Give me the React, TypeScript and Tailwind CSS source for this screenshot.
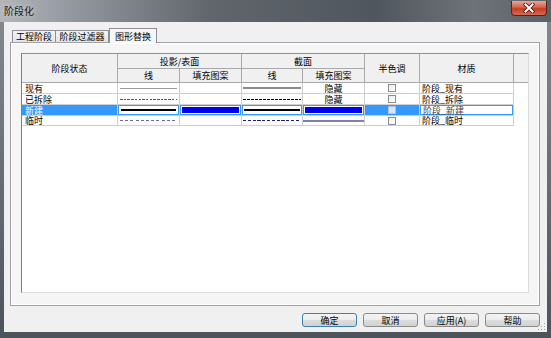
import React from "react";

type Stroke = { color: string; width?: number; dash?: string } | null;

type Row = {
  name: string;
  projLine: Stroke;
  cutLine: Stroke;
  cutFill: "hidden" | "line" | null;
  material: string;
  selected?: boolean;
};

const rows: Row[] = [
  {
    name: "现有",
    projLine: { color: "#9a9a9a" },
    cutLine: { color: "#8a8a8a", width: 2 },
    cutFill: "hidden",
    material: "阶段_现有",
  },
  {
    name: "已拆除",
    projLine: { color: "#555555", dash: "2.5 1.2" },
    cutLine: { color: "#000000", dash: "3 1" },
    cutFill: "hidden",
    material: "阶段_拆除",
  },
  {
    name: "新建",
    projLine: { color: "#000000", width: 2 },
    cutLine: { color: "#000000", width: 2 },
    cutFill: null,
    material: "阶段_新建",
    selected: true,
  },
  {
    name: "临时",
    projLine: { color: "#6a6aa6", dash: "3 2.2" },
    cutLine: { color: "#1e1e80", dash: "3.2 1.6" },
    cutFill: "line",
    material: "阶段_临时",
  },
];

function LineSample({ stroke }: { stroke: Stroke }) {
  if (!stroke) return null;
  const w = stroke.width ?? 1;
  return (
    <svg className="block w-full h-[3px]" preserveAspectRatio="none">
      <line
        x1="0"
        y1={w === 2 ? 1 : 1.5}
        x2="100%"
        y2={w === 2 ? 1 : 1.5}
        stroke={stroke.color}
        strokeWidth={w}
        strokeDasharray={stroke.dash}
        shapeRendering="crispEdges"
      />
    </svg>
  );
}

function CheckBox({ disabled }: { disabled?: boolean }) {
  return (
    <div
      className={
        disabled
          ? "w-[8px] h-[8px] border border-[#a9c3df] bg-[#d6e6f6]"
          : "w-[8px] h-[8px] border border-[#8e8f8f] bg-gradient-to-br from-[#ececec] to-white"
      }
    />
  );
}

const cell = "h-full whitespace-nowrap border-r border-b border-[#cfcfcf] flex items-center";

function DataRow({ row, last }: { row: Row; last: boolean }) {
  const sel = row.selected;
  const h = last ? "h-[10px]" : "h-[11px]";
  return (
    <div className={`flex ${h}`}>
      <div className={`${cell} w-[96px] pl-[3px] ${sel ? "bg-[#3399ff] text-white" : ""}`}>{row.name}</div>

      {/* 投影/表面 线 */}
      <div className={`${cell} w-[62px] ${sel ? "bg-[#3399ff] p-px" : "px-[2px]"}`}>
        {sel ? (
          <div className="w-full h-full bg-white flex items-center px-[2px]">
            <LineSample stroke={row.projLine} />
          </div>
        ) : (
          <LineSample stroke={row.projLine} />
        )}
      </div>

      {/* 投影/表面 填充图案 */}
      <div className={`${cell} w-[62px] ${sel ? "bg-[#3399ff] p-px" : ""}`}>
        {sel && (
          <div className="w-full h-full bg-white p-px">
            <div className="w-full h-full bg-[#0000f0]" />
          </div>
        )}
      </div>

      {/* 截面 线 */}
      <div className={`${cell} w-[61px] ${sel ? "bg-[#3399ff] p-px" : "px-[1px]"}`}>
        {sel ? (
          <div className="w-full h-full bg-white flex items-center px-[1px]">
            <LineSample stroke={row.cutLine} />
          </div>
        ) : (
          <LineSample stroke={row.cutLine} />
        )}
      </div>

      {/* 截面 填充图案 */}
      <div className={`${cell} w-[62px] justify-center ${sel ? "bg-[#3399ff] p-px" : ""}`}>
        {sel && (
          <div className="w-full h-full bg-white p-px">
            <div className="w-full h-full bg-[#0000f0]" />
          </div>
        )}
        {row.cutFill === "hidden" && <span>隐藏</span>}
        {row.cutFill === "line" && <div className="w-full h-[2px] bg-[#8080b0]" />}
      </div>

      {/* 半色调 */}
      <div className={`${cell} w-[55px] justify-center ${sel ? "bg-[#3399ff]" : ""}`}>
        <CheckBox disabled={sel} />
      </div>

      {/* 材质 */}
      <div className={`${cell} w-[94px] ${sel ? "bg-[#3399ff] p-px" : "pl-[2px]"}`}>
        {sel ? (
          <div className="w-full h-full bg-white flex items-center pl-[2px] text-[#444]">{row.material}</div>
        ) : (
          row.material
        )}
      </div>
      <div className="flex-1" />
    </div>
  );
}

function Button({ label, primary }: { label: string; primary?: boolean }) {
  return (
    <button
      className={`w-[55px] h-[14px] rounded-[3px] border ${
        primary ? "border-[#3c7fb1]" : "border-[#8a8a8a]"
      } bg-[linear-gradient(to_bottom,#f4f4f4,#ebebeb_50%,#dcdcdc_51%,#d2d2d2)] text-[9px] leading-none text-black flex items-center justify-center`}
    >
      {label}
    </button>
  );
}

export default function App() {
  const hdr = "bg-[#f0f0f0] border-r border-b border-[#a9a9a9] flex items-center justify-center";
  return (
    <div className="w-[551px] h-[338px] overflow-hidden flex flex-col bg-[linear-gradient(to_bottom,#868b91,#4d535a)] font-['Noto_Sans_CJK_SC','Noto_Sans',sans-serif] text-[9px] leading-none text-black">
      {/* title bar */}
      <div className="h-[22px] shrink-0 flex bg-[linear-gradient(to_right,#b2b6bb,#8d9298_16%,#60666c_38%,#50565d_68%,#6e7379_86%,#5b6168)]">
        <div className="pl-[4px] pt-[6px] text-[10px] text-[#151515] [text-shadow:0_0_5px_rgba(255,255,255,0.7)]">阶段化</div>
        <div className="ml-auto mr-[4px] mt-[1px] w-[36px] h-[15px] rounded-b-[4px] border border-t-0 border-[#5b2014] bg-[linear-gradient(to_bottom,#e9a797,#d4624a_45%,#c33c22_55%,#d66b52)] flex items-center justify-center">
          <svg width="12" height="10" viewBox="0 0 12 10">
            <path d="M2.5 1.5 L9.5 8.5 M9.5 1.5 L2.5 8.5" stroke="#4a120a" strokeWidth="3.6" strokeLinecap="square" />
            <path d="M2.5 1.5 L9.5 8.5 M9.5 1.5 L2.5 8.5" stroke="#ffffff" strokeWidth="2" strokeLinecap="square" />
          </svg>
        </div>
      </div>

      {/* client area */}
      <div className="relative mx-[4px] h-[310px] shrink-0 bg-[#f0f0f0] pt-[6px]">
        {/* tabs */}
        <div className="flex items-end h-[14px] pl-[8px]">
          <div className="w-[44px] h-[12px] border border-b-0 border-[#8c8f97] bg-[linear-gradient(to_bottom,#f3f3f3,#e4e4e4)] flex items-center justify-center">
            工程阶段
          </div>
          <div className="w-[53px] h-[12px] border border-b-0 border-l-0 border-[#8c8f97] bg-[linear-gradient(to_bottom,#f3f3f3,#e4e4e4)] flex items-center justify-center">
            阶段过滤器
          </div>
          <div className="relative z-10 -mb-px w-[48px] h-[15px] border border-b-0 border-[#8c8f97] bg-[#f7f7f7] flex items-center justify-center">
            图形替换
          </div>
        </div>

        {/* tab panel */}
        <div className="ml-[6px] w-[530px] h-[264px] border border-[#9ea1a8] bg-[#f5f5f5]">
          <div className="w-full h-full border border-white pt-[9px] pl-[9px]">
            <div className="w-[508px] h-[240px] border border-l-[#7d7d7d] border-t-[#8f8f8f] border-r-[#dcdcdc] border-b-[#dcdcdc] bg-white">
              {/* header */}
              <div className="grid grid-cols-[96px_62px_62px_61px_62px_55px_94px_14px] grid-rows-[15px_14px]">
                <div className={`${hdr} row-span-2`}>阶段状态</div>
                <div className={`${hdr} col-span-2`}>投影/表面</div>
                <div className={`${hdr} col-span-2`}>截面</div>
                <div className={`${hdr} row-span-2`}>半色调</div>
                <div className={`${hdr} row-span-2`}>材质</div>
                <div className="row-span-2 bg-[#f0f0f0] border-b border-[#a9a9a9]" />
                <div className={hdr}>线</div>
                <div className={hdr}>填充图案</div>
                <div className={hdr}>线</div>
                <div className={hdr}>填充图案</div>
              </div>
              {rows.map((r, i) => (
                <DataRow key={r.name} row={r} last={i === rows.length - 1} />
              ))}
            </div>
          </div>
        </div>

        {/* buttons */}
        <div className="flex justify-end gap-[6px] pr-[7px] mt-[7px]">
          <Button label="确定" primary />
          <Button label="取消" />
          <Button label="应用(A)" />
          <Button label="帮助" />
        </div>

        {/* resize grip */}
        <svg className="absolute right-[1px] bottom-[1px]" width="9" height="9" viewBox="0 0 9 9">
          {[
            [7, 1],
            [4, 4],
            [7, 4],
            [1, 7],
            [4, 7],
            [7, 7],
          ].map(([x, y]) => (
            <g key={`${x}-${y}`}>
              <rect x={x + 1} y={y + 1} width="1" height="1" fill="#ffffff" />
              <rect x={x} y={y} width="1" height="1" fill="#a0a0a0" />
            </g>
          ))}
        </svg>
      </div>
    </div>
  );
}
